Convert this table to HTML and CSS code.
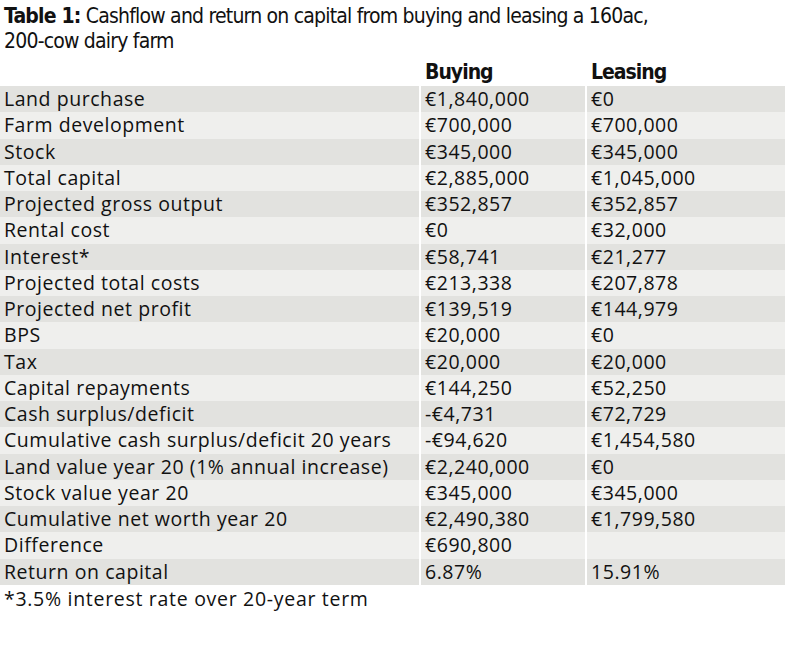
FILE: index.html
```html
<!DOCTYPE html>
<html>
<head>
<meta charset="utf-8">
<link rel="stylesheet" href="styles.css">
</head>
<body>
<div class="figure">
  <h1 class="title"><span class="label">Table 1:</span> Cashflow and return on capital from buying and leasing a 160ac,<br>200-cow dairy farm</h1>
  <div class="table">
    <div class="row head"><div class="cell"></div><div class="cell">Buying</div><div class="cell">Leasing</div></div>
    <div class="row"><div class="cell">Land purchase</div><div class="cell">€1,840,000</div><div class="cell">€0</div></div>
    <div class="row"><div class="cell">Farm development</div><div class="cell">€700,000</div><div class="cell">€700,000</div></div>
    <div class="row"><div class="cell">Stock</div><div class="cell">€345,000</div><div class="cell">€345,000</div></div>
    <div class="row"><div class="cell">Total capital</div><div class="cell">€2,885,000</div><div class="cell">€1,045,000</div></div>
    <div class="row"><div class="cell">Projected gross output</div><div class="cell">€352,857</div><div class="cell">€352,857</div></div>
    <div class="row"><div class="cell">Rental cost</div><div class="cell">€0</div><div class="cell">€32,000</div></div>
    <div class="row"><div class="cell">Interest*</div><div class="cell">€58,741</div><div class="cell">€21,277</div></div>
    <div class="row"><div class="cell">Projected total costs</div><div class="cell">€213,338</div><div class="cell">€207,878</div></div>
    <div class="row"><div class="cell">Projected net profit</div><div class="cell">€139,519</div><div class="cell">€144,979</div></div>
    <div class="row"><div class="cell">BPS</div><div class="cell">€20,000</div><div class="cell">€0</div></div>
    <div class="row"><div class="cell">Tax</div><div class="cell">€20,000</div><div class="cell">€20,000</div></div>
    <div class="row"><div class="cell">Capital repayments</div><div class="cell">€144,250</div><div class="cell">€52,250</div></div>
    <div class="row"><div class="cell">Cash surplus/deficit</div><div class="cell">-€4,731</div><div class="cell">€72,729</div></div>
    <div class="row"><div class="cell">Cumulative cash surplus/deficit 20 years</div><div class="cell">-€94,620</div><div class="cell">€1,454,580</div></div>
    <div class="row"><div class="cell">Land value year 20 (1% annual increase)</div><div class="cell">€2,240,000</div><div class="cell">€0</div></div>
    <div class="row"><div class="cell">Stock value year 20</div><div class="cell">€345,000</div><div class="cell">€345,000</div></div>
    <div class="row"><div class="cell">Cumulative net worth year 20</div><div class="cell">€2,490,380</div><div class="cell">€1,799,580</div></div>
    <div class="row"><div class="cell">Difference</div><div class="cell">€690,800</div><div class="cell"></div></div>
    <div class="row"><div class="cell">Return on capital</div><div class="cell">6.87%</div><div class="cell">15.91%</div></div>
  </div>
  <p class="note">*3.5% interest rate over 20-year term</p>
</div>
</body>
</html>
```

FILE: styles.css
```css
html, body {
  margin: 0;
  padding: 0;
  background: #ffffff;
}
.figure {
  width: 790px;
  color: #111111;
}
.title {
  margin: 0;
  padding: 4px 0 0 4px;
  font-family: "DejaVu Sans Condensed", "Liberation Sans Narrow", sans-serif;
  font-weight: normal;
  font-size: 21px;
  letter-spacing: -0.8px;
  line-height: 25px;
  color: #111;
}
.title .label {
  font-weight: bold;
}
.table {
  margin-top: 3px;
}
.row {
  display: grid;
  grid-template-columns: 419px 164px 198px;
  column-gap: 2px;
  height: 26.26px;
}
.row .cell {
  padding-left: 4px;
  font-family: "Open Sans", sans-serif;
  font-weight: 500;
  font-size: 19.5px;
  letter-spacing: 0.55px;
  line-height: 26px;
  white-space: nowrap;
}
.row:nth-child(even) .cell {
  background: #e2e2df;
}
.row:nth-child(odd) .cell {
  background: #efefed;
}
.row.head {
  height: 29px;
}
.row.head .cell {
  background: #ffffff;
  font-family: "DejaVu Sans Condensed", "Liberation Sans Narrow", sans-serif;
  font-weight: bold;
  font-size: 21px;
  letter-spacing: -1px;
  line-height: 30px;
}
.note {
  margin: 0;
  padding: 2px 0 0 4px;
  font-family: "Open Sans", sans-serif;
  font-weight: 500;
  font-size: 19.5px;
  letter-spacing: 0.7px;
  line-height: 24px;
}
```
